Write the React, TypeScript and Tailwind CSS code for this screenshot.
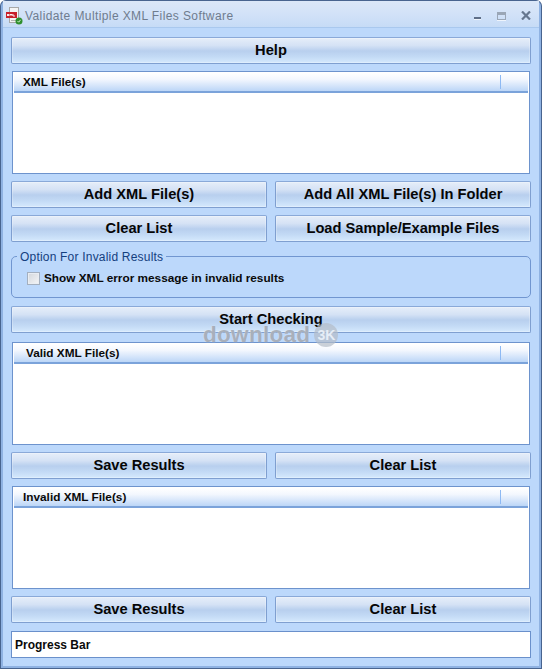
const font = "font-['Liberation_Sans',Arial,sans-serif]";

function Btn({ label }: { label: string }) {
  return (
    <div className="h-[27px] pb-[2px] flex items-center justify-center rounded-[2px] border border-[#7f9fd0] border-t-[#8aa9d8] bg-[linear-gradient(to_bottom,#e6eef9_0%,#d5e2f5_30%,#b8cfee_52%,#c3daf5_75%,#d5e9fd_100%)] text-[14.67px] font-bold text-[#060606] shadow-[inset_0_0_0_1px_rgba(255,255,255,0.25)]">
      {label}
    </div>
  );
}

function ListBox({ label, labelPad }: { label: string; labelPad: string }) {
  return (
    <div className="h-[103px] mx-px border border-[#6d93cd] bg-white flex flex-col">
      <div className={`h-[20px] shrink-0 mx-px mt-px flex items-center border-b-2 border-[#7ba3da] bg-[linear-gradient(to_bottom,#ffffff_0%,#f3f7fe_35%,#bcd6f7_100%)] ${labelPad}`}>
        <span className="flex-1 pt-[2px] text-[11.8px] font-bold text-[#0a0a0a]">{label}</span>
        <span className="w-px h-[14px] bg-[#8db9f3] mr-[27px]" />
      </div>
    </div>
  );
}

function Row({ a, b }: { a: string; b: string }) {
  return (
    <div className="grid grid-cols-[256px_256px] gap-x-[8px]">
      <Btn label={a} />
      <Btn label={b} />
    </div>
  );
}

export default function App() {
  return (
    <div className={`${font} w-[542px] h-[669px] overflow-hidden bg-[#48648f] px-px pt-px pb-px rounded-t-[6px]`}>
      <div className="relative h-full flex flex-col bg-[#bcd8fb] border-x-2 border-b-2 border-[#8fb2e2] rounded-t-[5px]">
        <div className="h-[27px] shrink-0 flex items-center bg-[linear-gradient(to_bottom,#dbe7f8_0%,#d2e2f8_50%,#c6dbf6_100%)] border-b border-[#a9c8ee]">
          <svg width="17" height="18" viewBox="0 0 17 18" className="shrink-0 ml-[3px] mt-[4px]">
            <rect x="3.5" y="0.5" width="9" height="15" fill="#f4f4f4" stroke="#a8a8a8" />
            <rect x="5" y="13" width="6" height="1" fill="#b5b5b5" />
            <rect x="0" y="5" width="11" height="6" fill="#c8202a" />
            <path d="M1 7 L3 9 M3 7 L1 9 M4 7 V9 M4 7 L5 8 L6 7 V9 M7 7 V9 H9" stroke="#ffffff" strokeWidth="0.9" fill="none" />
            <circle cx="13" cy="14" r="3.5" fill="#2f8f2e" />
            <path d="M11.5 14 L12.7 15.2 L14.6 12.8" stroke="#cfeec8" strokeWidth="1" fill="none" />
          </svg>
          <span className="ml-[2px] pt-[4px] text-[12px] text-[#6f7c8e] tracking-[0.4px] flex-1">Validate Multiple XML Files Software</span>
          <div className="flex items-start self-start mt-[10px] mr-[8px]">
            <span className="w-[7px] h-[2px] mt-[6px] bg-[#5f6f88] shadow-[0_1px_0_#eef4fc] mr-[16px]" />
            <span className="w-[9px] h-[8px] mt-[1px] border border-[#9aa6b6] border-t-[3px] shadow-[0_1px_0_#eef4fc] mr-[15px]" />
            <svg width="10" height="9" viewBox="0 0 10 9">
              <path d="M1 0.5 L9 8.5 M9 0.5 L1 8.5" stroke="#66778f" strokeWidth="2.2" />
            </svg>
          </div>
        </div>

        <div className="flex-1 flex flex-col pl-[8px] w-[528px]">
          <div className="mt-[9px]"><Btn label="Help" /></div>
          <div className="mt-[7px]"><ListBox label="XML File(s)" labelPad="pl-[9px]" /></div>
          <div className="mt-[7px]"><Row a="Add XML File(s)" b="Add All XML File(s) In Folder" /></div>
          <div className="mt-[7px]"><Row a="Clear List" b="Load Sample/Example Files" /></div>

          <div className="mt-[14px] relative h-[42px] border border-[#7196d0] rounded-[5px]">
            <span className="absolute left-[5px] top-[-7px] px-[3px] bg-[#bcd8fb] text-[12px] leading-[14px] text-[#14407f] tracking-[0.2px]">Option For Invalid Results</span>
            <div className="absolute left-[15px] top-[14px] flex items-center">
              <span className="w-[13px] h-[13px] border border-[#a3afbf] bg-[linear-gradient(135deg,#d3d7dc,#f4f5f7)] shadow-[inset_0_0_0_1px_#e9edf2]" />
              <span className="ml-[4px] pt-[1px] text-[11.8px] leading-[13px] font-bold text-[#0a0a0a]">Show XML error message in invalid results</span>
            </div>
          </div>

          <div className="mt-[8px]"><Btn label="Start Checking" /></div>
          <div className="mt-[9px]"><ListBox label="Valid XML File(s)" labelPad="pl-[12px]" /></div>
          <div className="mt-[7px]"><Row a="Save Results" b="Clear List" /></div>
          <div className="mt-[7px]"><ListBox label="Invalid XML File(s)" labelPad="pl-[9px]" /></div>
          <div className="mt-[7px]"><Row a="Save Results" b="Clear List" /></div>
          <div className="mt-[8px] h-[27px] border border-[#6a90cb] bg-white flex items-center pl-[3px] text-[12px] font-bold text-[#0a0a0a]">Progress Bar</div>
        </div>

        <div className="absolute left-[200px] top-[322px] flex items-center gap-[4px] pointer-events-none">
          <span className="text-[22.5px] leading-[24px] font-bold tracking-[0.3px] text-[#98a0ac]/80 [text-shadow:0_0_1px_#e4eaf2]">download</span>
          <span className="w-[24px] h-[24px] rounded-full bg-[#b4bcc8]/70 flex items-center justify-center text-[14px] font-bold text-[#e6edf6]">3K</span>
        </div>
      </div>
    </div>
  );
}
